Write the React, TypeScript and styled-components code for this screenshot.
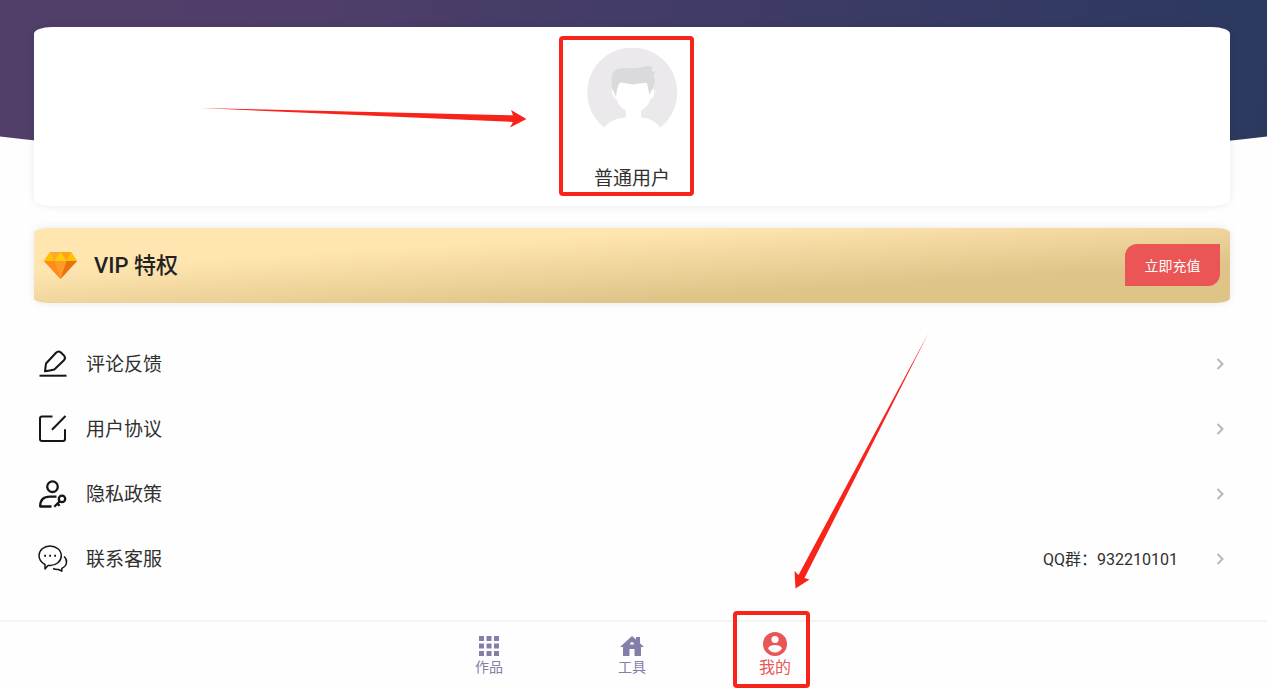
import React from "react";
import styled, { createGlobalStyle } from "styled-components";

const GlobalStyle = createGlobalStyle`
  *, *::before, *::after { box-sizing: border-box; }
  body {
    margin: 0;
    background: #fefefe;
    color: #303030;
    font-family: Roboto, "Noto Sans CJK SC", sans-serif;
  }
`;

const Page = styled.div`
  position: relative;
  display: flex;
  flex-direction: column;
  min-height: 100vh;
  padding-right: 3px;
  overflow: hidden;
`;

const Backdrop = styled.div`
  position: absolute;
  top: 0;
  left: 0;
  right: 0;
  height: 170px;
  background: linear-gradient(100deg, #513f69 0%, #4e3e69 25%, #2f3962 90%, #2b395f 100%);
  clip-path: ellipse(84% 100% at 50% 0);
`;

const Main = styled.main`
  position: relative;
  padding: 27px 34px 0;
`;

const ProfileCard = styled.section`
  position: relative;
  display: flex;
  flex-direction: column;
  align-items: center;
  gap: 27px;
  padding: 21px 0 13px;
  background: #fff;
  border-radius: 18px / 7px;
  box-shadow: 0 0 8px rgba(0, 0, 0, 0.08);
`;

const UserName = styled.h1`
  margin: 0;
  font-size: 19px;
  line-height: 28px;
  font-weight: 400;
`;

const VipCard = styled.section`
  display: flex;
  align-items: center;
  margin-top: 22px;
  padding: 16px 10px 17px;
  border-radius: 14px / 5px;
  background: linear-gradient(to bottom right, #ffe5b0 28%, #dfc488 74%);
  box-shadow: 0 0 8px rgba(0, 0, 0, 0.09);
`;

const VipTitle = styled.h2`
  flex: 1;
  margin: 0 0 0 17px;
  padding-top: 2px;
  font-size: 22px;
  line-height: 32px;
  font-weight: 500;
  color: #222;
`;

const RechargeButton = styled.button`
  width: 95px;
  height: 42px;
  padding: 0;
  border: 0;
  border-radius: 12px 0;
  background: #eb5556;
  color: #fff;
  font: inherit;
  font-size: 14px;
`;

const Menu = styled.nav`
  margin-top: 28px;
`;

const MenuRow = styled.a`
  display: flex;
  align-items: center;
  height: 65px;
  padding: 0 4px;
  color: inherit;
  text-decoration: none;
`;

const MenuLabel = styled.span`
  flex: 1;
  margin-left: 18px;
  padding-top: 2px;
  font-size: 19px;
  line-height: 28px;
`;

const MenuValue = styled.span`
  margin-right: 36px;
  padding-top: 2px;
  font-size: 16px;
  line-height: 24px;
`;

const TabBar = styled.nav`
  position: relative;
  display: flex;
  justify-content: center;
  height: 69px;
  margin: auto -3px 0 0;
  padding-right: 3px;
  border-top: 2px solid #f4f4f4;
`;

const Tab = styled.a<{ $active?: boolean }>`
  position: relative;
  display: flex;
  flex-direction: column;
  align-items: center;
  width: 143px;
  padding-top: ${(p) => (p.$active ? "9px" : "14px")};
  color: ${(p) => (p.$active ? "#e85656" : "#837fa8")};
  font-size: ${(p) => (p.$active ? "16px" : "14px")};
  line-height: 22px;
  text-decoration: none;
`;

const Marker = styled.span`
  position: absolute;
  border: 4px solid #f8241a;
  border-radius: 4px;
  pointer-events: none;
`;

const ProfileMarker = styled(Marker)`
  top: 9px;
  left: calc(50% - 73px);
  width: 135px;
  height: 160px;
`;

const TabMarker = styled(Marker)`
  top: -11px;
  left: 29px;
  width: 77px;
  height: 77px;
`;

const ProfileArrow = styled.svg`
  position: absolute;
  top: 76px;
  left: calc(50% - 434px);
`;

const TabArrow = styled.svg`
  position: absolute;
  bottom: 99px;
  left: calc(50% + 156px);
  pointer-events: none;
`;

const Avatar = () => (
  <svg width="90" height="90" viewBox="0 0 90 90" role="img" aria-label="头像">
    <path d="M17 79.500A45 45 0 1 1 73.500 79.500Q66 70 54 69.500V62.500Q61 59 63.500 51Q67 50 67.500 44Q67.500 41 64 41L62 34H29L27 41Q24.500 41 25 45Q26 50 29.500 51Q32 59 39 62.500V69.500Q25 70 17 79.500Z" fill="#ebe9eb" />
    <path d="M31 34.500Q46 38 60 35L62.500 49Q61 59 54 62.500L50 66H43L39 62.500Q31 59 29.500 49Z" fill="#fff" />
    <path d="M29 49L25.500 41Q23 28 27 23Q31 19.500 40 20Q50 21 57 18.500Q62 17 66 19.500Q62 22 68 25Q65.500 26.500 68 31Q68 38 64.500 42L62.500 47L60 35Q53 34.500 46 36.500Q39 35 33 34.500Q30 38 29 49Z" fill="#dad9dc" />
  </svg>
);

const Diamond = () => (
  <svg width="33" height="27" viewBox="0 0 33 27" aria-hidden="true">
    <path d="M6 0H27L33 9L16.500 27L0 9Z" fill="#ff9a24" />
    <path d="M6 0H16.500L10.500 9H0Z" fill="#ffc400" />
    <path d="M27 0H16.500L22.500 9H33Z" fill="#ffc400" />
    <path d="M6 0H16.500L10.500 9Z" fill="#ffa733" />
    <path d="M16.500 0H27L22.500 9Z" fill="#ffa01e" />
    <path d="M16.500 0L22.500 9H10.500Z" fill="#ffcb0a" />
    <path d="M0 9H10.500L16.500 27Z" fill="#ff8b1a" />
    <path d="M22.500 9H33L16.500 27Z" fill="#e97312" />
  </svg>
);

const iconProps = {
  width: 30,
  height: 30,
  viewBox: "0 0 30 30",
  fill: "none",
  stroke: "#151515",
  strokeWidth: 2,
  strokeLinejoin: "round" as const,
  "aria-hidden": true,
};

const PenIcon = () => (
  <svg {...iconProps}>
    <path d="M7 22.300L8 14.500L18 3.800Q20.300 1.400 22.600 3.300L26 6.500Q28 9 26 11.200L16.300 20.500Q12 21.500 7 22.300Z" />
    <path d="M1.500 26.700H28.500" />
  </svg>
);

const AgreementIcon = () => (
  <svg {...iconProps}>
    <path d="M14.500 2.500H4Q2 2.500 2 4.500V25Q2 27 4 27H25Q27 27 27 25V15.300M14 15.800L27.500 2" />
  </svg>
);

const PrivacyIcon = () => (
  <svg {...iconProps} strokeWidth={2.3}>
    <circle cx="14.500" cy="7.700" r="5.300" />
    <path d="M13.500 27.500H2.200Q2 17.700 12 17.700H18.500" />
    <circle cx="24" cy="19.900" r="3.200" />
    <path d="M21.800 22.200L16.300 27.700M19.500 24.300L21.500 26.900" />
  </svg>
);

const ServiceIcon = () => (
  <svg {...iconProps} strokeWidth={1.5}>
    <path d="M7 25V20.500Q1 17 1 11.700C1 6 6 2 12 2S23.300 6 23.300 11.700S18 21.500 12 21.500Q10.800 21.500 10 21.400Z" />
    <path d="M26 12.500Q29 15 28.500 18.500Q28 22.500 23.800 24.400V27.200L20.500 25.500Q17.500 25.700 15 24.500" />
    <path d="M6.200 11.700H8M11.200 11.700H13M16.200 11.700H18" strokeWidth="2" />
  </svg>
);

const Chevron = () => (
  <svg width="12" height="14" viewBox="0 0 12 14" fill="none" stroke="#b8b8b8" strokeWidth="2" aria-hidden="true">
    <path d="M3.500 2L8.500 7L3.500 12" />
  </svg>
);

const GridIcon = () => (
  <svg width="20" height="20" viewBox="0 0 20 20" fill="currentColor" aria-hidden="true">
    <path d="M0 0h5v5H0zM7.500 0h5v5h-5zM15 0h5v5h-5zM0 7.500h5v5H0zM7.500 7.500h5v5h-5zM15 7.500h5v5h-5zM0 15h5v5H0zM7.500 15h5v5h-5zM15 15h5v5h-5z" />
  </svg>
);

const HomeIcon = () => (
  <svg width="24" height="20" viewBox="0 0 24 20" fill="currentColor" fillRule="evenodd" aria-hidden="true">
    <path d="M0 11L12 0L16 3.500V1H20V7.200L24 11H21V20H14.500V13H9.500V20H3V11ZM10 8.500H14Q14 6 12 6T10 8.500Z" />
  </svg>
);

const UserIcon = () => (
  <svg width="26" height="26" viewBox="0 0 26 26" aria-hidden="true">
    <circle cx="13" cy="13" r="12" fill="currentColor" />
    <circle cx="13" cy="8.500" r="3.600" fill="#fff" />
    <path d="M6 17.200Q8 14 13 14T20 17.200Q17.500 21.500 13 21.500T6 17.200Z" fill="#fff" />
  </svg>
);

const menu = [
  { label: "评论反馈", Icon: PenIcon },
  { label: "用户协议", Icon: AgreementIcon },
  { label: "隐私政策", Icon: PrivacyIcon },
  { label: "联系客服", Icon: ServiceIcon, value: "QQ群：932210101" },
];

export default function App() {
  return (
    <>
      <GlobalStyle />
      <Page>
        <Backdrop />
        <Main>
          <ProfileCard>
            <Avatar />
            <UserName>普通用户</UserName>
            <ProfileArrow width="330" height="30" viewBox="0 0 330 30" aria-hidden="true">
              <path d="M2 5L315 12.300L313 7L328.500 16L312 24.500L315 19Z" fill="#f8241a" />
            </ProfileArrow>
            <ProfileMarker />
          </ProfileCard>
          <VipCard>
            <Diamond />
            <VipTitle>VIP 特权</VipTitle>
            <RechargeButton type="button">立即充值</RechargeButton>
          </VipCard>
          <Menu>
            {menu.map(({ label, Icon, value }) => (
              <MenuRow href="#" key={label}>
                <Icon />
                <MenuLabel>{label}</MenuLabel>
                {value && <MenuValue>{value}</MenuValue>}
                <Chevron />
              </MenuRow>
            ))}
          </Menu>
        </Main>
        <TabBar>
          <Tab href="#">
            <GridIcon />
            作品
          </Tab>
          <Tab href="#">
            <HomeIcon />
            工具
          </Tab>
          <Tab href="#" $active aria-current="page">
            <UserIcon />
            我的
            <TabMarker />
          </Tab>
        </TabBar>
        <TabArrow width="144" height="260" viewBox="0 0 144 260" aria-hidden="true">
          <path d="M138.500 3L14.500 248L19.500 249.500L5.500 258.500L4.500 241L8.500 245Z" fill="#f8241a" />
        </TabArrow>
      </Page>
    </>
  );
}
